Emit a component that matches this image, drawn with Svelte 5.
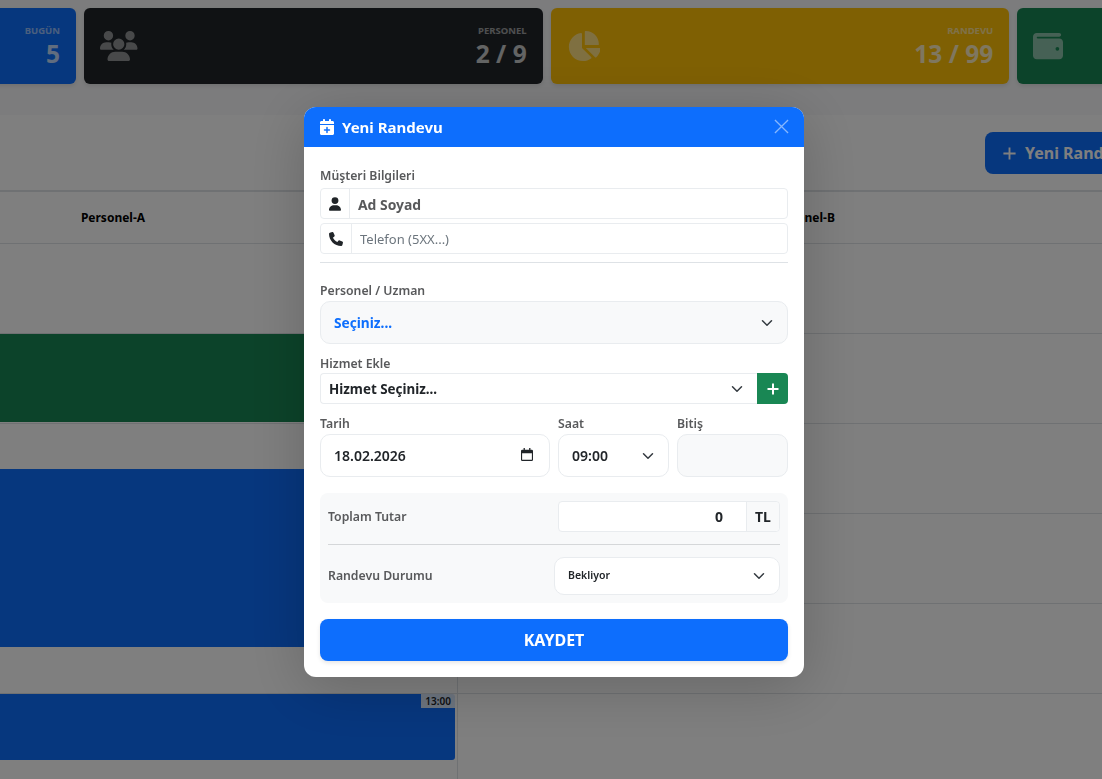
<script lang="ts">
	const CHEVRON = 'M2 5l6 6 6-6';
	const HOURS = [0, 1, 2, 3, 4, 5];

	const stats = [
		{ label: 'BUGÜN', value: '5', tone: 'blue', icon: '', box: '' },
		{
			label: 'PERSONEL',
			value: '2 / 9',
			tone: 'dark',
			box: '0 0 640 512',
			icon: 'M144 0a80 80 0 1 1 0 160A80 80 0 1 1 144 0zM512 0a80 80 0 1 1 0 160A80 80 0 1 1 512 0zM0 298.7C0 239.8 47.8 192 106.7 192h42.7c15.9 0 31 3.5 44.6 9.7c-1.3 7.2-1.9 14.7-1.9 22.3c0 38.2 16.8 72.5 43.3 96c-.2 0-.4 0-.7 0H21.3C9.6 320 0 310.4 0 298.7zM405.3 320c-.2 0-.4 0-.7 0c26.6-23.5 43.3-57.8 43.3-96c0-7.6-.7-15-1.9-22.3c13.6-6.3 28.7-9.7 44.6-9.7h42.7C592.2 192 640 239.8 640 298.7c0 11.8-9.6 21.3-21.3 21.3H405.3zM224 224a96 96 0 1 1 192 0 96 96 0 1 1 -192 0zM128 485.3C128 411.7 187.7 352 261.3 352H378.7C452.3 352 512 411.7 512 485.3c0 14.7-11.9 26.7-26.7 26.7H154.7c-14.7 0-26.7-11.9-26.7-26.7z'
		},
		{
			label: 'RANDEVU',
			value: '13 / 99',
			tone: 'yellow',
			box: '0 0 576 512',
			icon: 'M304 240V16.6c0-9 7-16.6 16-16.6C443.7 0 544 100.3 544 224c0 9-7.6 16-16.6 16H304zM32 272C32 150.7 122.1 50.3 239 34.3c9.2-1.3 17 6.1 17 15.4V288L412.5 444.5c6.7 6.7 6.2 17.7-1.5 23.1C371.8 495.6 323.8 512 272 512C139.5 512 32 404.6 32 272zm526.4 16c9.3 0 16.6 7.8 15.4 17c-7.7 55.9-34.6 105.6-73.9 142.3c-6 5.6-15.4 5.2-21.2-.7L320 288H558.4z'
		},
		{
			label: '',
			value: '',
			tone: 'green',
			box: '0 0 512 512',
			icon: 'M64 32C28.7 32 0 60.7 0 96V416c0 35.3 28.7 64 64 64H448c35.3 0 64-28.7 64-64V192c0-35.3-28.7-64-64-64H80c-8.8 0-16-7.2-16-16s7.2-16 16-16H448c17.7 0 32-14.3 32-32s-14.3-32-32-32H64zM416 272a32 32 0 1 1 0 64 32 32 0 1 1 0-64z'
		}
	];
</script>

{#snippet chevron()}
	<svg class="chev" viewBox="0 0 16 16" aria-hidden="true"><path d={CHEVRON} /></svg>
{/snippet}

<div class="page">
	<div class="stats">
		{#each stats as s}
			<div class="stat {s.tone}">
				{#if s.icon}
					<svg class="stat-icon" viewBox={s.box} aria-hidden="true"><path d={s.icon} /></svg>
				{/if}
				<div class="stat-text">
					<span class="stat-label">{s.label}</span>
					<span class="stat-value">{s.value}</span>
				</div>
			</div>
		{/each}
	</div>

	<section class="board">
		<div class="board-top">
			<button class="new-btn" type="button">
				<svg viewBox="0 0 16 16" aria-hidden="true"><path d="M8 1.5v13M1.5 8h13" /></svg>
				Yeni Randevu
			</button>
		</div>
		<div class="board-head">
			<div>Personel-A</div>
			<div>Personel-B</div>
		</div>
		<div class="board-rows">
			{#each HOURS as h}
				<div class="row"><div class="cell"></div><div class="cell"></div></div>
			{/each}
			<div class="event green" style="top: 90px; height: 88px"></div>
			<div class="event blue" style="top: 225px; height: 178px"></div>
			<div class="event blue" style="top: 450px; height: 66px"><span class="tag">13:00</span></div>
		</div>
	</section>
</div>

<div class="backdrop">
	<div class="modal">
		<header class="modal-head">
			<h2>
				<svg viewBox="0 0 448 512" aria-hidden="true"
					><path
						d="M96 32V64H48C21.5 64 0 85.5 0 112v48H448V112c0-26.5-21.5-48-48-48H352V32c0-17.7-14.3-32-32-32s-32 14.3-32 32V64H160V32c0-17.7-14.3-32-32-32S96 14.3 96 32zM448 192H0V464c0 26.5 21.5 48 48 48H400c26.5 0 48-21.5 48-48V192zM224 248c13.3 0 24 10.7 24 24v56h56c13.3 0 24 10.7 24 24s-10.7 24-24 24H248v56c0 13.3-10.7 24-24 24s-24-10.7-24-24V376H144c-13.3 0-24-10.7-24-24s10.7-24 24-24h56V272c0-13.3 10.7-24 24-24z"
					/></svg
				>
				Yeni Randevu
			</h2>
			<button class="close" type="button" aria-label="Kapat">
				<svg viewBox="0 0 16 16" aria-hidden="true"><path d="M1 1l14 14M15 1L1 15" /></svg>
			</button>
		</header>

		<div class="modal-body">
			<div class="lbl first">Müşteri Bilgileri</div>
			<div class="group">
				<span class="addon name">
					<svg viewBox="0 0 448 512" aria-hidden="true"
						><path
							d="M224 256A128 128 0 1 0 224 0a128 128 0 1 0 0 256zm-45.7 48C79.8 304 0 383.8 0 482.3C0 498.7 13.3 512 29.7 512H418.3c16.4 0 29.7-13.3 29.7-29.7C448 383.8 368.2 304 269.7 304H178.3z"
						/></svg
					>
				</span>
				<span class="field strong">Ad Soyad</span>
			</div>
			<div class="group second">
				<span class="addon phone">
					<svg viewBox="0 0 512 512" aria-hidden="true"
						><path
							d="M164.9 24.6c-7.7-18.6-28-28.5-47.4-23.2l-88 24C12.1 30.2 0 46 0 64C0 311.4 200.6 512 448 512c18 0 33.8-12.1 38.6-29.5l24-88c5.3-19.4-4.6-39.7-23.2-47.4l-96-40c-16.3-6.8-35.2-2.1-46.3 11.6L304.7 368C234.3 334.7 177.3 277.7 144 207.3L193.3 167c13.7-11.2 18.4-30 11.6-46.3l-40-96z"
						/></svg
					>
				</span>
				<span class="field muted">Telefon (5XX...)</span>
			</div>
			<hr class="rule" />

			<div class="lbl uzman">Personel / Uzman</div>
			<div class="select big">
				<span>Seçiniz...</span>
				{@render chevron()}
			</div>

			<div class="lbl hizmet">Hizmet Ekle</div>
			<div class="service">
				<div class="select small">
					<span>Hizmet Seçiniz...</span>
					{@render chevron()}
				</div>
				<button class="add" type="button" aria-label="Ekle">
					<svg viewBox="0 0 16 16" aria-hidden="true"><path d="M8 2.5v11M2.5 8h11" /></svg>
				</button>
			</div>

			<div class="when">
				<div>
					<div class="lbl">Tarih</div>
					<div class="select tall date">
						<span>18.02.2026</span>
						<svg class="cal" viewBox="0 0 14 15" aria-hidden="true">
							<path d="M3 0h1.5v2h5V0H11v2h1.5A1.5 1.5 0 0 1 14 3.5v10a1.5 1.5 0 0 1-1.5 1.5h-11A1.5 1.5 0 0 1 0 13.5v-10A1.5 1.5 0 0 1 1.5 2H3zM1.3 6v7.7h11.4V6z" />
						</svg>
					</div>
				</div>
				<div>
					<div class="lbl">Saat</div>
					<div class="select tall">
						<span>09:00</span>
						{@render chevron()}
					</div>
				</div>
				<div>
					<div class="lbl">Bitiş</div>
					<div class="select tall off"></div>
				</div>
			</div>

			<div class="summary">
				<div class="sum-row total">
					<span class="sum-label">Toplam Tutar</span>
					<div class="amount">
						<span class="amount-value">0</span>
						<span class="amount-unit">TL</span>
					</div>
				</div>
				<hr class="sum-rule" />
				<div class="sum-row status">
					<span class="sum-label">Randevu Durumu</span>
					<div class="select mini">
						<span>Bekliyor</span>
						{@render chevron()}
					</div>
				</div>
			</div>

			<button class="save" type="button">KAYDET</button>
		</div>
	</div>
</div>

<style>
	:global(body) {
		margin: 0;
		background: #f8f9fa;
		overflow: hidden;
	}

	.page,
	.backdrop {
		font-family: 'Noto Sans', 'Open Sans', sans-serif;
	}

	.page {
		width: 1102px;
		height: 779px;
		overflow: hidden;
		padding-top: 8px;
		box-sizing: border-box;
	}

	.stats {
		display: grid;
		grid-template-columns: repeat(4, 458.67px);
		gap: 8px;
		margin-left: -382.67px;
		width: 1860px;
	}

	.stat {
		height: 76px;
		border-radius: 6px;
		display: flex;
		align-items: center;
		justify-content: space-between;
		padding: 0 16px;
		box-sizing: border-box;
		color: #fff;
		box-shadow: 0 2px 4px rgba(0, 0, 0, 0.1);
	}
	.blue {
		background: #0d6efd;
	}
	.dark {
		background: #212529;
	}
	.yellow {
		background: #ffc107;
	}
	.green {
		background: #198754;
	}

	.stat-icon {
		height: 30px;
		fill: #fff;
		opacity: 0.5;
	}
	.stat-text {
		display: flex;
		flex-direction: column;
		align-items: flex-end;
		margin-left: auto;
		padding-top: 2px;
		opacity: 0.75;
	}
	.stat-label {
		font-size: 9.5px;
		font-weight: 700;
		line-height: 14px;
		opacity: 0.75;
	}
	.stat-value {
		font-size: 24.5px;
		font-weight: 700;
		line-height: 32px;
	}

	.board {
		margin: 31px 0 0 -232px;
		width: 1380px;
		background: #fff;
	}
	.board-top {
		height: 77px;
		border-bottom: 2px solid #dee2e6;
		padding: 17px 0 0 1217px;
		box-sizing: border-box;
	}
	.new-btn {
		display: flex;
		align-items: center;
		gap: 8px;
		height: 42px;
		width: 170px;
		padding: 0 17px;
		border: 0;
		border-radius: 8px;
		background: #0d6efd;
		color: #fff;
		font: 700 16px 'Noto Sans', sans-serif;
		white-space: nowrap;
	}
	.new-btn svg {
		width: 15px;
		height: 15px;
		fill: none;
		stroke: #fff;
		stroke-width: 2;
	}
	.board-head {
		display: grid;
		grid-template-columns: 690px 690px;
		height: 52px;
		box-sizing: border-box;
		align-items: center;
		border-bottom: 1px solid #dee2e6;
		text-align: center;
		font-size: 12px;
		font-weight: 700;
		color: #000;
	}
	.board-rows {
		position: relative;
	}
	.row {
		display: grid;
		grid-template-columns: 690px 690px;
		height: 90px;
		box-sizing: border-box;
		border-bottom: 1px solid #dee2e6;
	}
	.cell:first-child {
		border-right: 1px solid #dee2e6;
	}
	.event {
		position: absolute;
		left: 0;
		width: 687px;
		border-radius: 3px;
	}
	.tag {
		position: absolute;
		top: 0;
		right: 0;
		padding: 0 4px;
		height: 14px;
		line-height: 14px;
		font-size: 10px;
		font-weight: 600;
		color: #212529;
		background: rgba(255, 255, 255, 0.85);
	}

	.backdrop {
		position: fixed;
		inset: 0;
		background: rgba(0, 0, 0, 0.5);
		padding-top: 107px;
		box-sizing: border-box;
	}
	.modal {
		width: 500px;
		margin-left: 304px;
		background: #fff;
		border-radius: 12px;
		overflow: hidden;
		box-shadow: 0 10px 60px rgba(0, 0, 0, 0.2);
	}
	.modal-head {
		height: 40px;
		background: #0d6efd;
		color: #fff;
		display: flex;
		align-items: center;
		justify-content: space-between;
		padding: 0 15px 0 16px;
	}
	.modal-head h2 {
		margin: 0;
		display: flex;
		align-items: center;
		gap: 8px;
		font-size: 15px;
		font-weight: 700;
	}
	.modal-head h2 svg {
		width: 14px;
		height: 16px;
		fill: #fff;
	}
	.close {
		border: 0;
		padding: 0;
		background: none;
		display: flex;
		margin-top: -2px;
	}
	.close svg {
		width: 15px;
		height: 15px;
		fill: none;
		stroke: #fff;
		stroke-width: 1.4;
		opacity: 0.5;
	}

	.modal-body {
		padding: 20px 16px 16px;
		color: #212529;
	}
	.lbl {
		font-size: 12.25px;
		font-weight: 600;
		line-height: 17px;
		color: #58595b;
		margin-bottom: 2px;
	}
	.lbl.first {
		margin-bottom: 4px;
	}
	.lbl.uzman {
		margin: 19px 0 2px;
	}
	.lbl.hizmet {
		margin: 11px 0 1px;
	}

	.group {
		display: flex;
		height: 31px;
		border: 1px solid #e9ecef;
		border-radius: 4px;
		box-sizing: border-box;
	}
	.group.second {
		margin-top: 4px;
	}
	.addon {
		display: flex;
		align-items: center;
		justify-content: center;
		box-sizing: border-box;
		border-right: 1px solid #e9ecef;
		width: 29px;
	}
	.addon.phone {
		width: 31px;
	}
	.addon.name svg {
		width: 12px;
		height: 14px;
	}
	.addon.phone svg {
		width: 14px;
		height: 14px;
	}
	.addon svg {
		fill: #212529;
	}
	.field {
		display: flex;
		align-items: center;
		padding-left: 8px;
		padding-top: 1px;
		font-size: 13.9px;
	}
	.strong {
		font-weight: 700;
		color: #58595b;
	}
	.field.muted {
		color: #6c757d;
		font-size: 13px;
	}
	.rule {
		margin: 8px 0 0;
		border: 0;
		border-top: 1px solid #dee2e6;
	}

	.select {
		display: flex;
		align-items: center;
		justify-content: space-between;
		box-sizing: border-box;
		border: 1px solid #e9ecef;
		font-weight: 700;
		background: #fff;
	}
	.chev {
		width: 12px;
		height: 12px;
		margin-right: 2px;
		fill: none;
		stroke: #343a40;
		stroke-width: 2;
		stroke-linecap: round;
		stroke-linejoin: round;
		flex: none;
	}
	.select.big {
		height: 43px;
		border-radius: 10px;
		background: #f8f9fa;
		padding: 0 12px 0 13px;
		font-size: 13.7px;
		color: #0d6efd;
	}
	.service {
		display: flex;
		height: 31px;
	}
	.select.small {
		flex: 1;
		height: 31px;
		border-right: 0;
		border-radius: 4px 0 0 4px;
		padding: 0 12px 0 8px;
		font-size: 13.4px;
		color: #212529;
	}
	.add {
		width: 31px;
		border: 0;
		padding: 0;
		border-radius: 0 4px 4px 0;
		background: #198754;
		display: flex;
		align-items: center;
		justify-content: center;
	}
	.add svg {
		width: 16px;
		height: 16px;
		fill: none;
		stroke: #fff;
		stroke-width: 2;
	}

	.when {
		display: grid;
		grid-template-columns: 230px 111px 111px;
		gap: 8px;
		margin-top: 11px;
	}
	.select.tall {
		height: 43px;
		border-radius: 10px;
		padding: 0 12px 0 13px;
		font-size: 14px;
		font-weight: 600;
		color: #212529;
	}
	.select.off {
		background: #f8f9fa;
	}
	.select.date {
		padding-right: 16px;
	}
	.cal {
		width: 12px;
		height: 13px;
		margin-top: -2px;
		fill: #212529;
	}

	.summary {
		margin-top: 16px;
		height: 110px;
		padding: 8px;
		box-sizing: border-box;
		background: #f8f9fa;
		border-radius: 8px;
	}
	.sum-row {
		display: flex;
		align-items: center;
		justify-content: space-between;
	}
	.sum-label {
		font-size: 12.25px;
		font-weight: 600;
		color: #58595b;
	}
	.status .sum-label {
		padding-bottom: 2px;
	}
	.amount {
		display: flex;
		width: 222px;
		height: 31px;
		box-sizing: border-box;
		border: 1px solid #e9ecef;
		border-radius: 4px;
		background: #fff;
		font-size: 14px;
		font-weight: 700;
		color: #212529;
	}
	.amount-value {
		flex: 1;
		display: flex;
		align-items: center;
		justify-content: flex-end;
		padding-right: 23px;
	}
	.amount-unit {
		width: 32px;
		display: flex;
		align-items: center;
		justify-content: center;
		background: #f8f9fa;
		border-left: 1px solid #e9ecef;
		border-radius: 0 4px 4px 0;
	}
	.sum-rule {
		margin: 12px 0;
		border: 0;
		border-top: 1px solid #d5d7d9;
	}
	.select.mini {
		width: 226px;
		height: 38px;
		border-radius: 10px;
		padding: 0 12px 2px 13px;
		font-size: 10.5px;
		font-weight: 600;
		color: #212529;
	}
	.select.mini .chev {
		margin-top: 2px;
	}

	.save {
		display: block;
		width: 100%;
		height: 42px;
		margin-top: 16px;
		border: 0;
		border-radius: 8px;
		background: #0d6efd;
		color: #fff;
		font: 700 16px 'Noto Sans', sans-serif;
		box-shadow: 0 2px 4px rgba(0, 0, 0, 0.1);
	}
</style>
